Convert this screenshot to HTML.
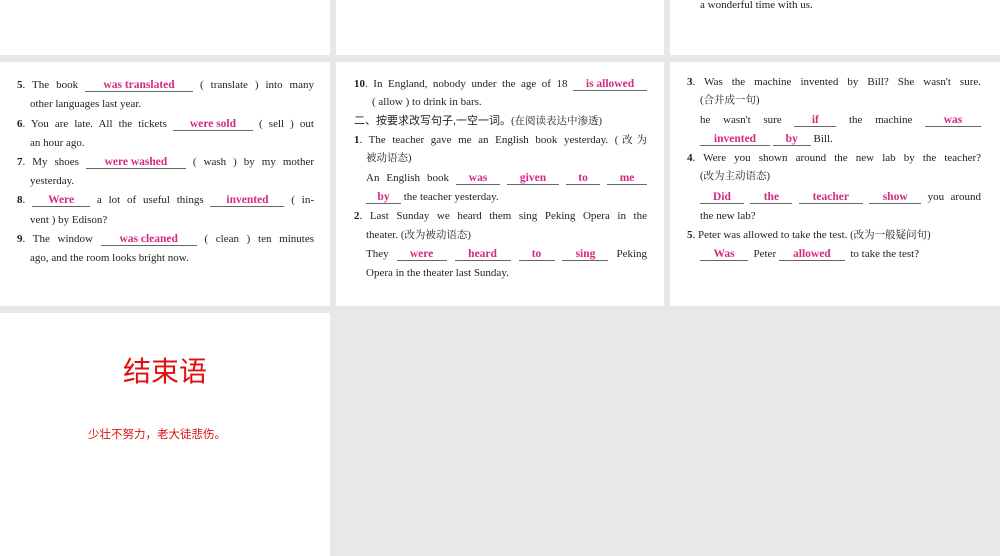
<!DOCTYPE html>
<html><head><meta charset="utf-8"><style>
body{margin:0;width:1000px;height:556px;background:#e8e8e8;position:relative;overflow:hidden;font-family:"Liberation Serif","Noto Serif CJK SC",serif;font-size:11px;color:#222}
.p{position:absolute;background:#fff}
.l{position:absolute;white-space:nowrap;line-height:14px;height:14px}
.j{text-align:justify;text-align-last:justify;white-space:normal}
.b{display:inline-block;border-bottom:1px solid #666;text-align:center;text-align-last:center;color:#d42a84;font-weight:bold;font-family:"Liberation Serif",serif;font-size:11.5px;line-height:12px;white-space:nowrap}
.n{font-weight:bold}
.cn{font-family:"Liberation Serif","Noto Serif CJK SC",serif;font-size:10.5px}
.h{font-family:"Liberation Sans","Noto Sans CJK SC",sans-serif;font-size:11px}
</style></head><body>
<div class="p" style="left:0;top:0;width:330px;height:55px"></div>
<div class="p" style="left:336px;top:0;width:328px;height:55px"></div>
<div class="p" style="left:670px;top:0;width:330px;height:55px"></div>
<div class="p" style="left:0;top:62px;width:330px;height:244px"></div>
<div class="p" style="left:336px;top:62px;width:328px;height:244px"></div>
<div class="p" style="left:670px;top:62px;width:330px;height:244px"></div>
<div class="p" style="left:0;top:313px;width:330px;height:243px"></div>

<div class="l" style="left:700px;top:-2px">a wonderful time with us.</div>

<!-- left -->
<div class="l j" style="left:17px;top:78px;width:297px"><span class="n">5</span>. The book <span class="b" style="width:108px">was translated</span> ( translate ) into many</div>
<div class="l" style="left:30px;top:97px">other languages last year.</div>
<div class="l j" style="left:17px;top:117px;width:297px"><span class="n">6</span>. You are late. All the tickets <span class="b" style="width:80px">were sold</span> ( sell ) out</div>
<div class="l" style="left:30px;top:136px">an hour ago.</div>
<div class="l j" style="left:17px;top:155px;width:297px"><span class="n">7</span>. My shoes <span class="b" style="width:100px">were washed</span> ( wash ) by my mother</div>
<div class="l" style="left:30px;top:174px">yesterday.</div>
<div class="l j" style="left:17px;top:193px;width:297px"><span class="n">8</span>. <span class="b" style="width:58px">Were</span> a lot of useful things <span class="b" style="width:74px">invented</span> ( in-</div>
<div class="l" style="left:30px;top:213px">vent ) by Edison?</div>
<div class="l j" style="left:17px;top:232px;width:297px"><span class="n">9</span>. The window <span class="b" style="width:96px">was cleaned</span> ( clean ) ten minutes</div>
<div class="l" style="left:30px;top:251px">ago, and the room looks bright now.</div>

<!-- middle -->
<div class="l j" style="left:354px;top:77px;width:293px"><span class="n">10</span>. In England, nobody under the age of 18 <span class="b" style="width:74px">is allowed</span></div>
<div class="l" style="left:372px;top:95px">( allow ) to drink in bars.</div>
<div class="l h" style="left:354px;top:114px">二、按要求改写句子,一空一词。<span class="cn">(在阅读表达中渗透)</span></div>
<div class="l j" style="left:354px;top:133px;width:293px"><span class="n">1</span>. The teacher gave me an English book yesterday. <span class="cn">(改为</span></div>
<div class="l cn" style="left:366px;top:152px">被动语态)</div>
<div class="l j" style="left:366px;top:171px;width:281px">An English book <span class="b" style="width:44px">was</span> <span class="b" style="width:52px">given</span> <span class="b" style="width:34px">to</span> <span class="b" style="width:40px">me</span></div>
<div class="l" style="left:366px;top:190px"><span class="b" style="width:35px">by</span> the teacher yesterday.</div>
<div class="l j" style="left:354px;top:209px;width:293px"><span class="n">2</span>. Last Sunday we heard them sing Peking Opera in the</div>
<div class="l" style="left:366px;top:228px">theater. <span class="cn">(改为被动语态)</span></div>
<div class="l j" style="left:366px;top:247px;width:281px">They <span class="b" style="width:50px">were</span> <span class="b" style="width:56px">heard</span> <span class="b" style="width:36px">to</span> <span class="b" style="width:46px">sing</span> Peking</div>
<div class="l" style="left:366px;top:266px">Opera in the theater last Sunday.</div>

<!-- right -->
<div class="l j" style="left:687px;top:75px;width:294px"><span class="n">3</span>. Was the machine invented by Bill? She wasn't sure.</div>
<div class="l cn" style="left:700px;top:94px">(合并成一句)</div>
<div class="l j" style="left:700px;top:113px;width:281px">he wasn't sure <span class="b" style="width:42px">if</span> the machine <span class="b" style="width:56px">was</span></div>
<div class="l" style="left:700px;top:132px"><span class="b" style="width:70px">invented</span> <span class="b" style="width:38px">by</span> Bill.</div>
<div class="l j" style="left:687px;top:151px;width:294px"><span class="n">4</span>. Were you shown around the new lab by the teacher?</div>
<div class="l cn" style="left:700px;top:170px">(改为主动语态)</div>
<div class="l j" style="left:700px;top:190px;width:281px"><span class="b" style="width:44px">Did</span> <span class="b" style="width:42px">the</span> <span class="b" style="width:64px">teacher</span> <span class="b" style="width:52px">show</span> you around</div>
<div class="l" style="left:700px;top:209px">the new lab?</div>
<div class="l" style="left:687px;top:228px"><span class="n">5</span>. Peter was allowed to take the test. <span class="cn">(改为一般疑问句)</span></div>
<div class="l" style="left:700px;top:247px"><span class="b" style="width:48px">Was</span> &nbsp;Peter <span class="b" style="width:66px">allowed</span> &nbsp;to take the test?</div>

<div style="position:absolute;left:0;width:330px;top:352px;text-align:center;color:#e01010;font-family:'Noto Sans CJK SC',sans-serif;font-size:28px;line-height:36px">结束语</div>
<div style="position:absolute;left:88px;top:426px;color:#d81010;font-family:'Noto Sans CJK SC',sans-serif;font-size:11.5px;line-height:16px">少壮不努力，老大徒悲伤。</div>
</body></html>
